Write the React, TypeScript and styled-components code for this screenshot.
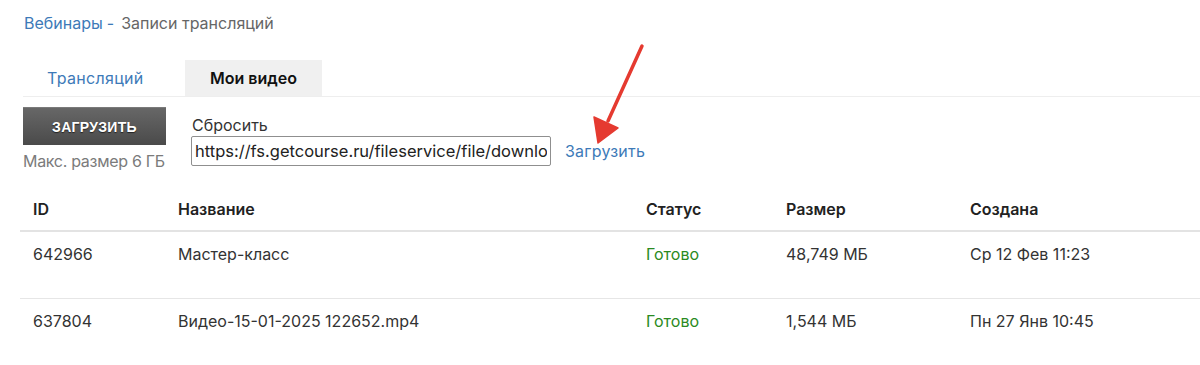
import React from "react";
import styled, { createGlobalStyle } from "styled-components";

const Global = createGlobalStyle`
  html, body { margin: 0; padding: 0; background: #fff; }
  body { font-family: Inter, "Noto Sans", "DejaVu Sans", sans-serif; color: #333; }
`;

const Page = styled.div`
  position: relative;
  width: 1200px;
  height: 365px;
  overflow: hidden;
  padding: 12px 0 0 23px;
  box-sizing: border-box;
`;

const Breadcrumbs = styled.div`
  display: flex;
  align-items: center;
  font-size: 16px;
  line-height: 22px;
  margin-left: 1px;
`;

const Crumb = styled.a`
  color: #3d7ab8;
  text-decoration: none;
`;

const Sep = styled.span`
  color: #3d7ab8;
  margin: 0 7px 0 4px;
`;

const Current = styled.span`
  color: #666;
`;

const Tabs = styled.div`
  display: flex;
  margin-top: 26px;
  border-bottom: 1px solid #eee;
`;

const Tab = styled.div<{ $active?: boolean }>`
  height: 36px;
  display: flex;
  align-items: center;
  box-sizing: border-box;
  justify-content: ${(p) => (p.$active ? "center" : "flex-start")};
  padding-left: ${(p) => (p.$active ? "0" : "24px")};
  width: ${(p) => (p.$active ? "137px" : "162px")};
  font-size: 16px;
  letter-spacing: ${(p) => (p.$active ? "0" : "0.3px")};
  font-weight: ${(p) => (p.$active ? 600 : 400)};
  color: ${(p) => (p.$active ? "#111" : "#3d7ab8")};
  background: ${(p) => (p.$active ? "#f0f0f0" : "transparent")};
`;

const UploadBar = styled.div`
  display: flex;
  align-items: flex-start;
  margin-top: 10px;
`;

const UploadCol = styled.div`
  display: flex;
  flex-direction: column;
`;

const DarkButton = styled.button`
  width: 143px;
  height: 38px;
  border: none;
  border-top: 1px solid #7a7a7a;
  background: linear-gradient(#676767, #4a4a4a);
  color: #fff;
  font-family: "Liberation Sans", Arial, sans-serif;
  font-weight: 700;
  font-size: 14px;
  letter-spacing: 0.3px;
  text-shadow: 0 1px 1px rgba(0, 0, 0, 0.6);
  padding: 0;
  cursor: pointer;
`;

const Hint = styled.div`
  margin-top: 6px;
  font-size: 16px;
  color: #7b7b7b;
  letter-spacing: -0.3px;
`;

const UrlCol = styled.div`
  display: flex;
  flex-direction: column;
  margin-left: 25px;
  margin-top: 8px;
`;

const ResetLabel = styled.div`
  font-size: 16px;
  line-height: 20px;
  color: #333;
  margin-left: 1px;
`;

const UrlRow = styled.div`
  display: flex;
  align-items: center;
  margin-top: 1px;
`;

const UrlInput = styled.input`
  width: 360px;
  height: 30px;
  box-sizing: border-box;
  border: 1px solid #8f8f8f;
  border-radius: 2px;
  padding: 0 3px;
  font-family: Inter, "Noto Sans", sans-serif;
  font-size: 16.5px;
  color: #222;
  outline: none;
`;

const UploadLink = styled.a`
  margin-left: 14px;
  font-size: 16px;
  letter-spacing: 0.2px;
  color: #3d7ab8;
  text-decoration: none;
`;

const Table = styled.table`
  border-collapse: collapse;
  table-layout: fixed;
  margin-top: 17px;
  margin-left: -3px;
  width: 1180px;
  font-size: 16px;
`;

const Th = styled.th`
  text-align: left;
  font-weight: 600;
  color: #222;
  height: 42px;
  padding: 0 0 0 13px;
  border-bottom: 2px solid #e3e3e3;
`;

const Td = styled.td<{ $ok?: boolean }>`
  vertical-align: top;
  padding: 12px 0 0 13px;
  height: 67px;
  box-sizing: border-box;
  color: ${(p) => (p.$ok ? "#2a8a22" : "#333")};
  border-bottom: 1px solid #e6e6e6;
`;

const LastTd = styled(Td)`
  border-bottom: none;
`;

const Arrow = styled.svg`
  position: absolute;
  left: 0;
  top: 0;
  pointer-events: none;
`;

const rows = [
  { id: "642966", name: "Мастер-класс", status: "Готово", size: "48,749 МБ", date: "Ср 12 Фев 11:23" },
  { id: "637804", name: "Видео-15-01-2025 122652.mp4", status: "Готово", size: "1,544 МБ", date: "Пн 27 Янв 10:45" },
];

export default function App() {
  return (
    <>
      <Global />
      <Page>
        <Breadcrumbs>
          <Crumb href="#">Вебинары</Crumb>
          <Sep>-</Sep>
          <Current>Записи трансляций</Current>
        </Breadcrumbs>
        <Tabs>
          <Tab>Трансляций</Tab>
          <Tab $active>Мои видео</Tab>
        </Tabs>
        <UploadBar>
          <UploadCol>
            <DarkButton>ЗАГРУЗИТЬ</DarkButton>
            <Hint>Макс. размер 6 ГБ</Hint>
          </UploadCol>
          <UrlCol>
            <ResetLabel>Сбросить</ResetLabel>
            <UrlRow>
              <UrlInput readOnly value="https://fs.getcourse.ru/fileservice/file/download/a/123456/sc/123/h/abc.mp4" />
              <UploadLink href="#">Загрузить</UploadLink>
            </UrlRow>
          </UrlCol>
        </UploadBar>
        <Table>
          <colgroup>
            <col style={{ width: 145 }} />
            <col style={{ width: 468 }} />
            <col style={{ width: 140 }} />
            <col style={{ width: 184 }} />
            <col />
          </colgroup>
          <thead>
            <tr>
              <Th>ID</Th>
              <Th>Название</Th>
              <Th>Статус</Th>
              <Th>Размер</Th>
              <Th>Создана</Th>
            </tr>
          </thead>
          <tbody>
            {rows.map((r, i) => {
              const C = i === rows.length - 1 ? LastTd : Td;
              return (
                <tr key={r.id}>
                  <C>{r.id}</C>
                  <C>{r.name}</C>
                  <C $ok>{r.status}</C>
                  <C>{r.size}</C>
                  <C>{r.date}</C>
                </tr>
              );
            })}
          </tbody>
        </Table>
        <Arrow width="1200" height="365" viewBox="0 0 1200 365">
          <line x1="642" y1="46" x2="608" y2="121" stroke="#e53a30" strokeWidth="3.5" strokeLinecap="round" />
          <polygon points="598,143 594,117 618,128" fill="#e53a30" stroke="#e53a30" strokeWidth="1.5" strokeLinejoin="round" />
        </Arrow>
      </Page>
    </>
  );
}
